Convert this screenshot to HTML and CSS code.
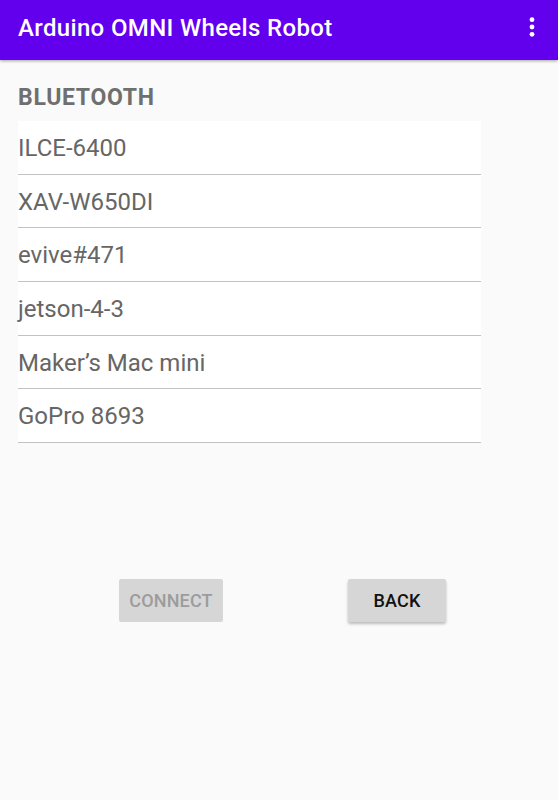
FILE: index.html
```html
<!DOCTYPE html>
<html>
<head>
<meta charset="utf-8">
<link rel="stylesheet" href="styles.css">
</head>
<body>
<header class="appbar">
  <h1 class="title">Arduino OMNI Wheels Robot</h1>
  <div class="menu">
    <svg width="6" height="20" viewBox="0 0 6 20"><circle cx="3" cy="2.7" r="2.4" fill="#fff"/><circle cx="3" cy="10" r="2.4" fill="#fff"/><circle cx="3" cy="17.3" r="2.4" fill="#fff"/></svg>
  </div>
</header>
<main class="content">
  <h2 class="section">BLUETOOTH</h2>
  <ul class="devices">
    <li class="device">ILCE-6400</li>
    <li class="device">XAV-W650DI</li>
    <li class="device">evive#471</li>
    <li class="device">jetson-4-3</li>
    <li class="device">Maker’s Mac mini</li>
    <li class="device">GoPro 8693</li>
  </ul>
  <div class="actions">
    <button class="btn btn-disabled">CONNECT</button>
    <button class="btn btn-raised">BACK</button>
  </div>
</main>
</body>
</html>
```
FILE: styles.css
```css
html, body {
  margin: 0;
  padding: 0;
}
body {
  background: #fafafa;
  font-family: Roboto, "Liberation Sans", sans-serif;
  width: 558px;
  height: 800px;
  overflow: hidden;
}
.appbar {
  height: 60px;
  background: #6200ee;
  display: flex;
  align-items: center;
  justify-content: space-between;
  padding: 0 23px 0 18px;
  box-shadow: 0 1px 3px rgba(0,0,0,0.35);
  position: relative;
}
.title {
  margin: 0 0 4px 0;
  color: #fff;
  font-size: 24px;
  font-weight: 500;
  letter-spacing: 0.35px;
}
.menu {
  display: flex;
  align-items: center;
  height: 20px;
  margin-top: -6px;
}
.content {
  padding: 0 18px;
}
.section {
  margin: 0;
  padding-top: 26px;
  height: 35px;
  font-size: 23px;
  line-height: 24px;
  font-weight: 700;
  letter-spacing: 0.7px;
  color: #6f6f6f;
}
.devices {
  list-style: none;
  margin: 0;
  padding: 0;
  width: 463px;
  background: #fff;
}
.device {
  height: 52.7px;
  line-height: 54px;
  border-bottom: 1px solid #c2c2c2;
  font-size: 24px;
  color: #666;
  padding: 0;
  box-sizing: content-box;
}
.actions {
  display: flex;
  gap: 125px;
  padding-left: 101px;
  margin-top: 136px;
}
.btn {
  height: 43px;
  border: none;
  border-radius: 2px;
  background: #d6d6d6;
  font-family: Roboto, "Liberation Sans", sans-serif;
  font-size: 18px;
  font-weight: 500;
  letter-spacing: 0.15px;
  padding: 0;
}
.btn-disabled {
  width: 104px;
  color: #9c9c9c;
}
.btn-raised {
  width: 98px;
  color: #111;
  box-shadow: 0 2px 3px rgba(0,0,0,0.25);
}
```
